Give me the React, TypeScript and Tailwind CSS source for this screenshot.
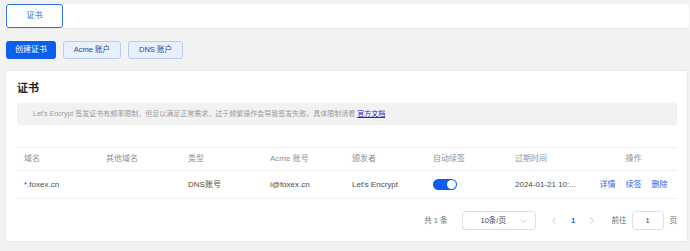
import React, { useState } from 'react';

const columns = ['域名', '其他域名', '类型', 'Acme 账号', '颁发者', '自动续签', '过期时间'];

type CertRow = {
  domain: string;
  otherDomains: string;
  type: string;
  acme: string;
  issuer: string;
  autoRenew: boolean;
  expiresAt: string;
};

const rows: CertRow[] = [
  {
    domain: '*.foxex.cn',
    otherDomains: '',
    type: 'DNS账号',
    acme: 'i@foxex.cn',
    issuer: "Let's Encrypt",
    autoRenew: true,
    expiresAt: '2024-01-21 10:26:41',
  },
];

// the column is too narrow for the full time, keep the date + hour only
const shortTime = (value: string) => value.slice(0, 14) + '...';

function Toggle({ checked, onChange }: { checked: boolean; onChange: (v: boolean) => void }) {
  return (
    <button
      onClick={() => onChange(!checked)}
      className={`flex h-[11px] w-[24px] items-center rounded-full px-[1px] ${checked ? 'justify-end bg-[#0b5ef0]' : 'justify-start bg-[#c9ccd3]'}`}
    >
      <span className='h-[9px] w-[9px] rounded-full bg-white' />
    </button>
  );
}

function App() {
  const [data, setData] = useState<CertRow[]>(rows);

  return (
    <div className='flex h-[251px] w-[690px] flex-col bg-[#f2f2f3] px-[5px] pt-[4px] font-["Liberation_Sans","Noto_Sans_CJK_SC",sans-serif]'>
      {/* tabs */}
      <div className='flex h-[25px] w-[684px] items-start rounded-[3px] border-b border-[#e6e8ee] bg-white pl-[1px]'>
        <div className='flex h-[24px] w-[57px] items-center justify-center rounded-[3px] border-[1.5px] border-[#3071ea] text-[8px] text-[#2b63d9]'>证书</div>
      </div>

      {/* actions */}
      <div className='mt-[12px] flex h-[18px] items-center gap-[7px] pl-[1px]'>
        <button className='flex h-[18px] w-[50px] items-center justify-center rounded-[3px] bg-[#0b5fef] text-[8px] text-white'>创建证书</button>
        <button className='flex h-[18px] w-[58px] items-center justify-center rounded-[3px] border border-[#b7cdf5] bg-[#e8f0fd] text-[7.5px] text-[#24488f]'>Acme 账户</button>
        <button className='flex h-[18px] w-[55px] items-center justify-center rounded-[3px] border border-[#b7cdf5] bg-[#e8f0fd] text-[7.5px] text-[#24488f]'>DNS 账户</button>
      </div>

      {/* card */}
      <div className='mt-[11px] flex h-[172px] w-[683px] flex-col rounded-[3px] border border-[#e7eaf0] bg-white pl-[11px] pr-[10px] pt-[10px]'>
        <h1 className='h-[14px] text-[11px] leading-[14px] font-bold text-[#1f1f1f]'>证书</h1>
        <div className='mt-[8px] flex h-[22px] items-center rounded-[3px] bg-[#f2f2f3] pl-[16px] text-[7px] text-[#9a9a9a]'>
          Let&apos;s Encrypt 签发证书有频率限制，但足以满足正常需求，过于频繁操作会导致签发失败。具体限制请看&nbsp;
          <a className='text-[#2424e0] underline'>官方文档</a>
        </div>

        {/* table */}
        <div className='mt-[22px] flex flex-col text-[8px]'>
          <div className='grid h-[24px] grid-cols-[82px_82px_82px_82px_81px_82px_82px_1fr] items-center border-y border-[#eef0f4] text-[#8c9099]'>
            {columns.map((c) => (
              <div key={c} className='pl-[7px]'>{c}</div>
            ))}
            <div className='text-center'>操作</div>
          </div>
          {data.map((row, i) => (
            <div key={row.domain} className='grid h-[28px] grid-cols-[82px_82px_82px_82px_81px_82px_82px_1fr] items-center border-b border-[#eef0f4] text-[#4b4b4b]'>
              <div className='pl-[7px]'>{row.domain}</div>
              <div className='pl-[7px]'>{row.otherDomains}</div>
              <div className='pl-[7px]'>{row.type}</div>
              <div className='pl-[7px]'>{row.acme}</div>
              <div className='pl-[7px]'>{row.issuer}</div>
              <div className='pl-[7px]'>
                <Toggle
                  checked={row.autoRenew}
                  onChange={(v) => setData((prev) => prev.map((r, j) => (j === i ? { ...r, autoRenew: v } : r)))}
                />
              </div>
              <div className='pl-[7px]' title={row.expiresAt}>{shortTime(row.expiresAt)}</div>
              <div className='flex justify-center gap-[10px] text-[#1c67e6]'>
                <a>详情</a>
                <a>续签</a>
                <a>删除</a>
              </div>
            </div>
          ))}
        </div>

        {/* pagination */}
        <div className='mt-[12px] flex h-[19px] items-center justify-end text-[7.5px] text-[#6b6e75]'>
          <span>共 1 条</span>
          <div className='ml-[14px] flex h-[19px] w-[74px] items-center rounded-[3px] border border-[#dcdfe6] pl-[18px] pr-[8px] text-[#4b4b4b]'>
            <span className='flex-1'>10条/页</span>
            <svg width='7' height='4' viewBox='0 0 7 4' fill='none' stroke='#b8bcc4' strokeWidth='0.8'>
              <path d='M0.5 0.5 L3.5 3.3 L6.5 0.5' />
            </svg>
          </div>
          <div className='ml-[9px] flex items-center'>
            <span className='flex w-[19px] justify-center'>
              <svg width='4' height='7' viewBox='0 0 4 7' fill='none' stroke='#b8bcc4' strokeWidth='0.8'>
                <path d='M3.5 0.5 L0.7 3.5 L3.5 6.5' />
              </svg>
            </span>
            <span className='flex w-[19px] justify-center font-bold text-[#1c67e6]'>1</span>
            <span className='flex w-[19px] justify-center'>
              <svg width='4' height='7' viewBox='0 0 4 7' fill='none' stroke='#b8bcc4' strokeWidth='0.8'>
                <path d='M0.5 0.5 L3.3 3.5 L0.5 6.5' />
              </svg>
            </span>
          </div>
          <span className='ml-[10px]'>前往</span>
          <div className='ml-[5px] flex h-[19px] w-[32px] items-center justify-center rounded-[3px] border border-[#dcdfe6] text-[#4b4b4b]'>1</div>
          <span className='ml-[6px]'>页</span>
        </div>
      </div>
    </div>
  );
}

export default App;
